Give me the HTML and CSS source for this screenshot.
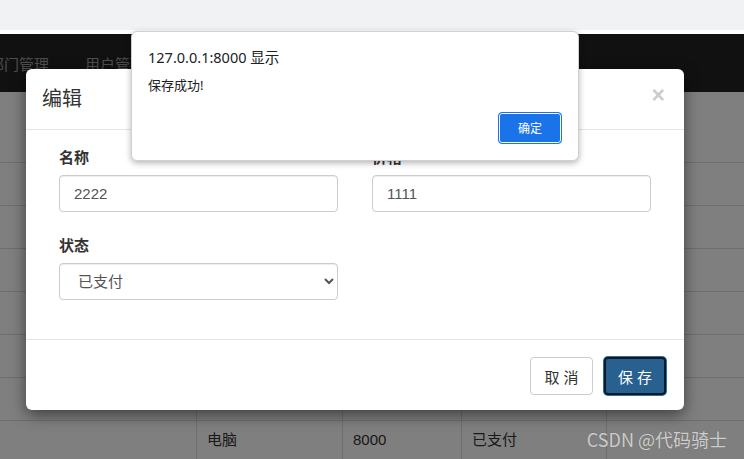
FILE: index.html
```html
<!DOCTYPE html>
<html lang="zh-CN">
  <head>
    <meta charset="UTF-8" />
    <meta name="viewport" content="width=device-width, initial-scale=1.0" />
    <title>订单管理</title>
    <link rel="stylesheet" href="styles.css">
  </head>
  <body>
    <div class="browser-bar"></div>

    <div class="page">
      <!-- Top navigation -->
      <nav class="navbar">
        <ul class="nav">
          <li>部门管理</li>
          <li>用户管理</li>
          <li>靓号管理</li>
          <li>订单管理</li>
        </ul>
      </nav>

      <!-- Order list -->
      <div class="content">
        <div class="toolbar"></div>
        <table class="list">
          <tr><td></td><td></td><td></td><td></td><td></td></tr>
          <tr><td></td><td></td><td></td><td></td><td></td></tr>
          <tr><td></td><td></td><td></td><td></td><td></td></tr>
          <tr><td></td><td></td><td></td><td></td><td></td></tr>
          <tr><td></td><td></td><td></td><td></td><td></td></tr>
          <tr><td></td><td></td><td></td><td></td><td></td></tr>
          <tr><td></td><td>电脑</td><td>8000</td><td>已支付</td><td></td></tr>
        </table>
      </div>

      <div class="backdrop"></div>

      <!-- Edit modal -->
      <div class="modal">
        <div class="modal-header">
          <h4>编辑</h4>
          <span class="close">&times;</span>
        </div>
        <form class="modal-body">
          <div class="form-group">
            <label>名称</label>
            <input class="form-control" type="text" value="2222" />
          </div>
          <div class="form-group">
            <label>价格</label>
            <input class="form-control" type="text" value="1111" />
          </div>
          <div class="form-group">
            <label>状态</label>
            <select class="form-control">
              <option>已支付</option>
              <option>待支付</option>
            </select>
          </div>
        </form>
        <div class="modal-footer">
          <button class="btn btn-default">取 消</button>
          <button class="btn btn-primary">保 存</button>
        </div>
      </div>
    </div>

    <!-- Browser alert -->
    <div class="alert-box">
      <div class="alert-title">127.0.0.1:8000 显示</div>
      <div class="alert-text">保存成功!</div>
      <div class="alert-actions">
        <button class="alert-btn">确定</button>
      </div>
    </div>

    <div class="watermark">CSDN @代码骑士</div>
  </body>
</html>
```

FILE: styles.css
```css
body {
  font-family: "Liberation Sans", "Noto Sans CJK SC", sans-serif;
  font-size: 15px;
  color: #333;
  background-color: #fff;
  margin: 0;
  padding: 0;
  height: 459px;
  overflow: hidden;
  position: relative;
}

.browser-bar {
  height: 30px;
  background-color: #f1f2f4;
  border-bottom: 4px solid #fff;
}

.page {
  position: relative;
  height: 425px;
  overflow: hidden;
}

/* Navbar */
.navbar {
  height: 58px;
  background-color: #222;
  display: flex;
  align-items: center;
}

.nav {
  list-style: none;
  margin: 0 0 0 -29px;
  padding: 0;
  display: flex;
}

.nav li {
  padding: 0 18px;
  color: #9d9d9d;
  font-size: 15px;
  white-space: nowrap;
}

/* Table */
.toolbar {
  height: 70px;
  border-bottom: 1px solid #ddd;
}

.list {
  width: 100%;
  border-collapse: collapse;
  table-layout: fixed;
}

.list td {
  height: 42px;
  padding: 0 10px;
  border-bottom: 1px solid #ddd;
  border-left: 1px solid #ddd;
  font-size: 15px;
  line-height: 20px;
}

.list tr:last-child td {
  vertical-align: top;
  padding-top: 9px;
}

.list td:first-child {
  width: 176px;
  border-left: none;
}

.list td:nth-child(2) {
  width: 125px;
}

.list td:nth-child(3) {
  width: 98px;
}

.list td:nth-child(4) {
  width: 124px;
}

.backdrop {
  position: absolute;
  left: 0;
  top: 0;
  right: 0;
  bottom: 0;
  background-color: rgba(0, 0, 0, 0.5);
}

/* Modal */
.modal {
  position: absolute;
  left: 26px;
  top: 35px;
  width: 658px;
  background-color: #fff;
  border-radius: 6px;
  box-shadow: 0 5px 15px rgba(0, 0, 0, 0.5);
}

.modal-header {
  display: flex;
  justify-content: space-between;
  align-items: center;
  padding: 16px 19px 16px 16px;
  border-bottom: 1px solid #e5e5e5;
}

.modal-header h4 {
  margin: 0;
  font-size: 20px;
  font-weight: normal;
  line-height: 28px;
  color: #333;
}

.close {
  font-size: 23px;
  font-weight: bold;
  line-height: 1;
  color: #000;
  opacity: 0.2;
  margin-top: -8px;
}

.modal-body {
  display: grid;
  grid-template-columns: 1fr 1fr;
  column-gap: 34px;
  row-gap: 23px;
  padding: 17px 33px 39px;
}

.form-group {
  display: flex;
  flex-direction: column;
}

.form-group label {
  font-weight: bold;
  font-size: 15px;
  line-height: 22px;
  margin-bottom: 6px;
}

.form-control {
  box-sizing: border-box;
  height: 37px;
  padding: 6px 14px;
  font-family: "Liberation Sans", "Noto Sans CJK SC", sans-serif;
  font-size: 15px;
  color: #555;
  background-color: #fff;
  border: 1px solid #ccc;
  border-radius: 4px;
  box-shadow: inset 0 1px 1px rgba(0, 0, 0, 0.075);
}

select.form-control {
  padding-left: 14px;
}

.modal-footer {
  display: flex;
  justify-content: flex-end;
  gap: 11px;
  padding: 17px 18px 15px;
  border-top: 1px solid #e5e5e5;
}

.btn {
  box-sizing: border-box;
  height: 38px;
  padding: 0;
  font-family: "Liberation Sans", "Noto Sans CJK SC", sans-serif;
  font-size: 15px;
  text-align: center;
  white-space: nowrap;
  border-radius: 4px;
  cursor: pointer;
}

.btn-default {
  width: 63px;
  color: #333;
  background-color: #fff;
  border: 1px solid #ccc;
}

.btn-primary {
  width: 62px;
  color: #fff;
  background-color: #286090;
  border: 2px solid #0e1a26;
  box-shadow: 0 0 0 1px #2e6da4;
}

/* Alert dialog */
.alert-box {
  position: absolute;
  left: 131px;
  top: 31px;
  width: 448px;
  box-sizing: border-box;
  padding: 15px 16px 16px;
  background-color: #fff;
  border: 1px solid #d0d0d0;
  border-radius: 6px;
  box-shadow: 0 2px 6px rgba(0, 0, 0, 0.3);
  font-family: "Noto Sans", "Noto Sans CJK SC", sans-serif;
  color: #202124;
}

.alert-title {
  font-size: 14.5px;
  line-height: 20px;
}

.alert-text {
  font-size: 13px;
  line-height: 18px;
  margin-top: 9px;
}

.alert-actions {
  display: flex;
  justify-content: flex-end;
  margin-top: 18px;
}

.alert-btn {
  width: 64px;
  height: 32px;
  font-family: "Noto Sans", "Noto Sans CJK SC", sans-serif;
  font-size: 12px;
  color: #fff;
  background-color: #1a73e8;
  border: 1px solid #1a73e8;
  border-radius: 4px;
  box-shadow: inset 0 0 0 1px #fff;
}

.watermark {
  position: absolute;
  right: 17px;
  bottom: 7px;
  font-family: "Noto Sans CJK SC", sans-serif;
  font-size: 18px;
  color: rgba(255, 255, 255, 0.7);
  text-shadow: 0 0 1px rgba(0, 0, 0, 0.3);
}
```
